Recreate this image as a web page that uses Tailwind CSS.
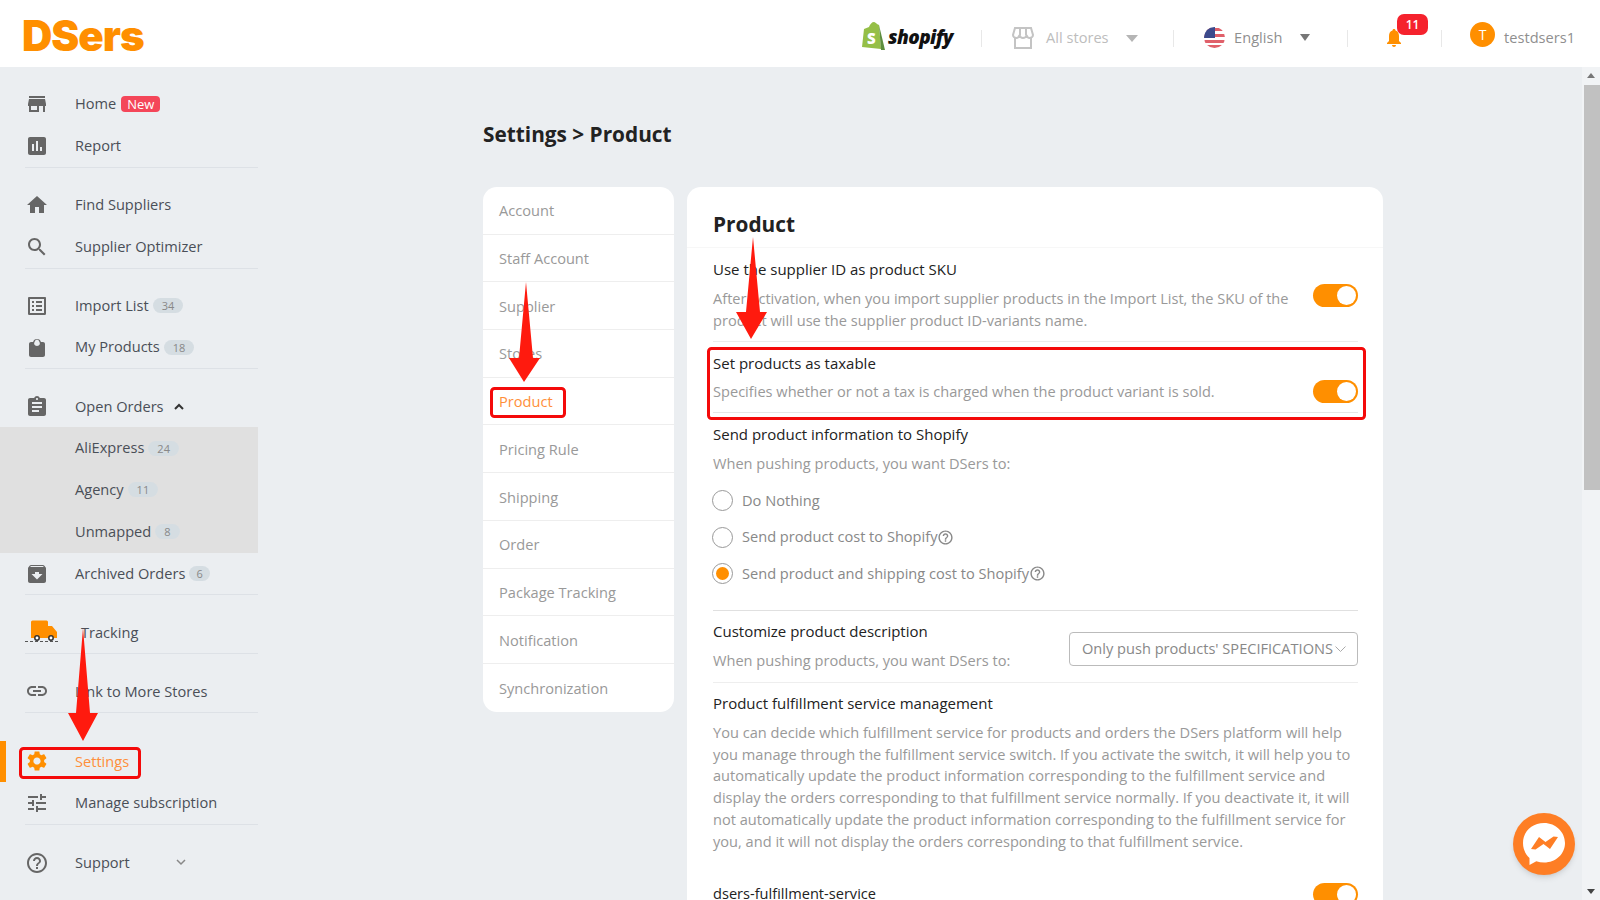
<!DOCTYPE html>
<html lang="en">
<head>
    <meta charset="UTF-8">
    <meta name="viewport" content="width=device-width, initial-scale=1.0">
    <title>DSers - Settings</title>
    <script src="https://cdn.jsdelivr.net/npm/@tailwindcss/browser@4"></script>
</head>
<body class="relative h-[900px] overflow-hidden bg-[#ebeef1] font-['Open_Sans',sans-serif] text-[14.600px] text-[#4a4f57]">

    <!-- top bar -->
    <header class="flex h-[67px] items-center bg-white">
        <div class="pl-[22px] pt-[4px] font-['Inter',sans-serif] text-[42px] font-black leading-none tracking-[-1px] text-[#ff8f00]">DSers</div>
        <div class="ml-auto flex items-center pt-[9px]">
            <div class="flex w-[119px] items-center">
                <svg class="h-[28px] w-[23px] -translate-y-[2px]" viewBox="0 0 23 28"><path fill="#95bf47" d="M2 7l5-2c1-3 3-5 5-5 1 0 2 1 3 2l2 1 2 24-19-2z"/><path fill="#5e8e3e" d="M17 3l6 25-4 0z"/><text x="5" y="22" font-size="15" font-weight="800" fill="#fff" font-family="Open Sans">S</text></svg>
                <span class="ml-[3px] -translate-y-[1px] text-[19px] font-extrabold italic leading-none tracking-[-0.6px] text-[#111]">shopify</span>
            </div>
            <div class="h-[17px] w-px bg-[#e8e8e8]"></div>
            <div class="flex w-[191px] items-center pl-[30px] text-[#bdbdbd]">
                <svg class="h-[22px] w-[22px]" viewBox="0 0 22 22" fill="none" stroke="#c4c4c4" stroke-width="2"><path d="M3 1h16l2 7c0 2-2 3-3.500 3S15 10 14.500 8c0 2-2 3-3.500 3S8 10 7.500 8C7 10 6 11 4.500 11S1 10 1 8zM3 11v10h16V11M8 1v7M14 1v7"/></svg>
                <span class="ml-[12px]">All stores</span>
                <span class="ml-[17px] h-0 w-0 border-x-[6px] border-t-[7px] border-x-transparent border-t-[#b5b5b5]"></span>
            </div>
            <div class="h-[17px] w-px bg-[#e8e8e8]"></div>
            <div class="flex w-[173px] items-center pl-[30px] text-[#8f8f8f]">
                <svg class="h-[21px] w-[21px] rounded-full" viewBox="0 0 21 21"><rect width="21" height="21" fill="#fff"/><path fill="#e0606a" d="M0 1h21v3H0zM0 7h21v3H0zM0 13h21v3H0zM0 18h21v3H0z"/><rect width="11" height="11" fill="#3c4a8c"/></svg>
                <span class="ml-[9px]">English</span>
                <span class="ml-[18px] h-0 w-0 border-x-[5.500px] border-t-[7px] border-x-transparent border-t-[#777]"></span>
            </div>
            <div class="h-[17px] w-px bg-[#e8e8e8]"></div>
            <div class="relative w-[93px] pl-[39px]">
                <svg class="h-[18px] w-[14px]" viewBox="0 0 14 18" fill="#ff8f00"><path d="M7 0c1 0 1.500.7 1.500 1.500C11 2.300 12 4.500 12 7v5l2 2v1H0v-1l2-2V7c0-2.500 1-4.700 3.500-5.500C5.500.7 6 0 7 0zM5 16h4c0 1-1 2-2 2s-2-1-2-2z"/></svg>
                <span class="absolute left-[49px] top-[-15px] flex h-[21px] w-[31px] items-center justify-center rounded-[7px] bg-[#f5222d] text-[12px] font-semibold text-white">11</span>
            </div>
            <div class="h-[17px] w-px bg-[#e8e8e8]"></div>
            <div class="flex items-center pl-[28px] pr-[25px] text-[#8f8f8f]">
                <span class="flex h-[25px] w-[25px] -translate-y-[4px] items-center justify-center rounded-full bg-[#ff8f00] text-[14px] text-white">T</span>
                <span class="ml-[9px]">testdsers1</span>
            </div>
        </div>
    </header>

    <div class="flex h-[833px] overflow-hidden">
        <!-- sidebar -->
        <nav class="w-[258px] shrink-0 pt-[16.500px]">
            <div class="ml-[25px] border-b border-[#dde1e6]">
                <a class="flex h-[41.800px] items-center gap-[26px]"><svg class="h-6 w-6 fill-[#666]" viewBox="0 0 24 24"><path d="M20 4H4v2h16V4zm1 10v-2l-1-5H4l-1 5v2h1v6h10v-6h4v6h2v-6h1zm-9 4H6v-4h6v4z"/></svg><span class="flex items-center">Home<span class="ml-[5px] rounded-[4px] bg-[#f44659] px-[6px] text-[13px] leading-[16px] text-white">New</span></span></a>
                <a class="flex h-[41.800px] items-center gap-[26px]"><svg class="h-6 w-6 fill-[#666]" viewBox="0 0 24 24"><path d="M19 3H5c-1.100 0-2 .9-2 2v14c0 1.100.9 2 2 2h14c1.100 0 2-.9 2-2V5c0-1.100-.9-2-2-2zM9 17H7v-7h2v7zm4 0h-2V7h2v10zm4 0h-2v-4h2v4z"/></svg>Report</a>
            </div>
            <div class="ml-[25px] mt-[16px] border-b border-[#dde1e6]">
                <a class="flex h-[41.800px] items-center gap-[26px]"><svg class="h-6 w-6 fill-[#666]" viewBox="0 0 24 24"><path d="M10 20v-6h4v6h5v-8h3L12 3 2 12h3v8z"/></svg>Find Suppliers</a>
                <a class="flex h-[41.800px] items-center gap-[26px]"><svg class="h-6 w-6 fill-[#666]" viewBox="0 0 24 24"><path d="M15.500 14h-.79l-.28-.27C15.410 12.590 16 11.110 16 9.500 16 5.910 13.090 3 9.500 3S3 5.910 3 9.500 5.910 16 9.500 16c1.610 0 3.090-.59 4.230-1.570l.27.28v.79l5 4.990L20.490 19l-4.990-5zm-6 0C7.010 14 5 11.990 5 9.500S7.010 5 9.500 5 14 7.010 14 9.500 11.990 14 9.500 14z"/></svg>Supplier Optimizer</a>
            </div>
            <div class="ml-[25px] mt-[16px] border-b border-[#dde1e6]">
                <a class="flex h-[41.800px] items-center gap-[26px]"><svg class="h-6 w-6 fill-[#666]" viewBox="0 0 24 24"><path d="M19 5v14H5V5h14m1.100-2H3.900c-.5 0-.9.4-.9.9v16.200c0 .4.4.9.9.9h16.200c.4 0 .9-.5.9-.9V3.900c0-.5-.5-.9-.9-.9zM11 7h6v2h-6V7zm0 4h6v2h-6v-2zm0 4h6v2h-6zM7 7h2v2H7zm0 4h2v2H7zm0 4h2v2H7z"/></svg><span class="flex items-center">Import List<span class="ml-[4px] rounded-full bg-[#d5dde2] px-[9px] text-[11px] leading-[15px] text-[#888]">34</span></span></a>
                <a class="flex h-[41.800px] items-center gap-[26px]"><svg class="h-6 w-6 fill-[#666]" viewBox="0 0 24 24"><path d="M18 7h-2.100a4 4 0 0 0-7.800 0H6c-1.100 0-2 .9-2 2v11c0 1.100.9 2 2 2h12c1.100 0 2-.9 2-2V9c0-1.100-.9-2-2-2zm-6-2.200c.9 0 1.700.5 2 1.200a5 5 0 0 1 .9 3c-.5 1.200-1.600 2-2.900 2s-2.400-.8-2.900-2a5 5 0 0 1 .9-3c.3-.7 1.100-1.200 2-1.200z"/></svg><span class="flex items-center">My Products<span class="ml-[4px] rounded-full bg-[#d5dde2] px-[9px] text-[11px] leading-[15px] text-[#888]">18</span></span></a>
            </div>
            <a class="ml-[25px] mt-[17px] flex h-[41px] items-center gap-[26px]"><svg class="h-6 w-6 fill-[#666]" viewBox="0 0 24 24"><path d="M19 3h-4.180C14.400 1.840 13.300 1 12 1c-1.300 0-2.400.84-2.820 2H5c-1.100 0-2 .9-2 2v14c0 1.100.9 2 2 2h14c1.100 0 2-.9 2-2V5c0-1.100-.9-2-2-2zm-7 0c.55 0 1 .45 1 1s-.45 1-1 1-1-.45-1-1 .45-1 1-1zm2 14H7v-2h7v2zm3-4H7v-2h10v2zm0-4H7V7h10v2z"/></svg><span class="flex items-center">Open Orders<svg class="ml-[10px] h-[8px] w-[10px]" viewBox="0 0 10 8" fill="none" stroke="#333" stroke-width="2"><path d="M1 6l4-4 4 4"/></svg></span></a>
            <div class="bg-[#e0e0e0] pl-[75px]">
                <a class="flex h-[41.800px] items-center">AliExpress<span class="ml-[4px] rounded-full bg-[#d5dde2] px-[9px] text-[11px] leading-[15px] text-[#888]">24</span></a>
                <a class="flex h-[41.800px] items-center">Agency<span class="ml-[4px] rounded-full bg-[#d5dde2] px-[9px] text-[11px] leading-[15px] text-[#888]">11</span></a>
                <a class="flex h-[41.800px] items-center">Unmapped<span class="ml-[4px] rounded-full bg-[#d5dde2] px-[9px] text-[11px] leading-[15px] text-[#888]">8</span></a>
            </div>
            <div class="ml-[25px] border-b border-[#dde1e6]">
                <a class="flex h-[41.800px] items-center gap-[26px]"><svg class="h-6 w-6 fill-[#666]" viewBox="0 0 24 24"><path d="M20.540 5.230l-1.390-1.680C18.880 3.210 18.470 3 18 3H6c-.47 0-.88.21-1.160.55L3.460 5.230C3.170 5.570 3 6.020 3 6.500V19c0 1.100.9 2 2 2h14c1.100 0 2-.9 2-2V6.500c0-.48-.17-.93-.46-1.270zM12 17.500L6.500 12H10v-2h4v2h3.500L12 17.500zM5.120 5l.81-1h12l.94 1H5.120z"/></svg><span class="flex items-center">Archived Orders<span class="ml-[4px] rounded-full bg-[#d5dde2] px-[7px] text-[11px] leading-[15px] text-[#888]">6</span></span></a>
            </div>
            <div class="ml-[25px] mt-[16.500px] border-b border-[#dde1e6]">
                <a class="flex h-[41px] items-center gap-[26px]"><svg class="h-[24px] w-[33px] -mr-[3px] -translate-y-[1px]" viewBox="0 0 33 24"><path fill="#ff8f00" d="M6 3a1.500 1.500 0 0 1 1.500-1.500h14A1.500 1.500 0 0 1 23 3v4h4l5 6v6H6z"/><circle cx="12" cy="19" r="2.200" fill="#fff" stroke="#333" stroke-width="1.500"/><circle cx="26" cy="19" r="2.200" fill="#fff" stroke="#333" stroke-width="1.500"/><path stroke="#555" stroke-dasharray="3 2" d="M0 22.500h33"/></svg>Tracking</a>
            </div>
            <div class="ml-[25px] mt-[17px] border-b border-[#dde1e6]">
                <a class="flex h-[41px] items-center gap-[26px]"><svg class="h-6 w-6 fill-[#666]" viewBox="0 0 24 24"><path d="M3.900 12c0-1.710 1.390-3.100 3.100-3.100h4V7H7c-2.760 0-5 2.240-5 5s2.240 5 5 5h4v-1.900H7c-1.710 0-3.100-1.390-3.100-3.100zM8 13h8v-2H8v2zm9-6h-4v1.900h4c1.710 0 3.100 1.390 3.100 3.100s-1.390 3.100-3.100 3.100h-4V17h4c2.760 0 5-2.240 5-5s-2.240-5-5-5z"/></svg>Link to More Stores</a>
            </div>
            <a class="mt-[28px] flex h-[41px] items-center gap-[26px] border-l-[6px] border-[#ff8f00] pl-[19px] text-[#ff8f3a]"><svg class="h-6 w-6 fill-[#ff8f00]" viewBox="0 0 24 24"><path d="M19.140 12.940c.04-.3.06-.61.06-.94 0-.32-.02-.64-.07-.94l2.030-1.580c.18-.14.23-.41.12-.61l-1.920-3.320c-.12-.22-.37-.29-.59-.22l-2.390.96c-.5-.38-1.030-.7-1.620-.94l-.36-2.540c-.04-.24-.24-.41-.48-.41h-3.840c-.24 0-.43.17-.47.41l-.36 2.540c-.59.24-1.130.57-1.620.94l-2.390-.96c-.22-.08-.47 0-.59.22L2.740 8.870c-.12.21-.08.47.12.61l2.030 1.580c-.05.3-.09.63-.09.94s.02.64.07.94l-2.030 1.580c-.18.14-.23.41-.12.61l1.920 3.320c.12.22.37.29.59.22l2.390-.96c.5.38 1.030.7 1.620.94l.36 2.540c.05.24.24.41.48.41h3.840c.24 0 .44-.17.47-.41l.36-2.540c.59-.24 1.130-.56 1.620-.94l2.390.96c.22.08.47 0 .59-.22l1.920-3.320c.12-.22.07-.47-.12-.61l-2.010-1.580zM12 15.600c-1.980 0-3.600-1.620-3.600-3.600s1.620-3.600 3.600-3.600 3.600 1.620 3.600 3.600-1.620 3.600-3.600 3.600z"/></svg>Settings</a>
            <div class="ml-[25px] border-b border-[#dde1e6]">
                <a class="flex h-[41.800px] items-center gap-[26px]"><svg class="h-6 w-6 fill-[#666]" viewBox="0 0 24 24"><path d="M3 17v2h6v-2H3zM3 5v2h10V5H3zm10 16v-2h8v-2h-8v-2h-2v6h2zM7 9v2H3v2h4v2h2V9H7zm14 4v-2H11v2h10zm-6-4h2V7h4V5h-4V3h-2v6z"/></svg>Manage subscription</a>
            </div>
            <a class="ml-[25px] mt-[17px] flex h-[42px] items-center gap-[26px]"><svg class="h-6 w-6 fill-[#666]" viewBox="0 0 24 24"><path d="M11 18h2v-2h-2v2zm1-16C6.480 2 2 6.480 2 12s4.480 10 10 10 10-4.480 10-10S17.520 2 12 2zm0 18c-4.410 0-8-3.590-8-8s3.590-8 8-8 8 3.590 8 8-3.590 8-8 8zm0-14c-2.210 0-4 1.790-4 4h2c0-1.100.9-2 2-2s2 .9 2 2c0 2-3 1.750-3 5h2c0-2.250 3-2.500 3-5 0-2.210-1.790-4-4-4z"/></svg><span class="flex items-center">Support<svg class="ml-[46px] h-[7px] w-[10px]" viewBox="0 0 10 7" fill="none" stroke="#888" stroke-width="1.500"><path d="M1 1l4 4 4-4"/></svg></span></a>
        </nav>

        <!-- settings page -->
        <main class="pl-[225px]">
            <h1 class="mt-[52px] h-[30px] text-[20.800px] font-bold leading-[30px] text-[#222]">Settings &gt; Product</h1>
            <div class="mt-[38px] flex gap-[13px]">
                <ul class="h-[525px] w-[191px] overflow-hidden rounded-[14px] bg-white text-[#999]">
                    <li class="flex h-[47.700px] items-center border-b border-[#eee] pl-[16px] pt-[2px]">Account</li>
                    <li class="flex h-[47.700px] items-center border-b border-[#eee] pl-[16px] pt-[2px]">Staff Account</li>
                    <li class="flex h-[47.700px] items-center border-b border-[#eee] pl-[16px] pt-[2px]">Supplier</li>
                    <li class="flex h-[47.700px] items-center border-b border-[#eee] pl-[16px] pt-[2px]">Stores</li>
                    <li class="flex h-[47.700px] items-center border-b border-[#eee] pl-[16px] pt-[2px] text-[#ff8f3a]">Product</li>
                    <li class="flex h-[47.700px] items-center border-b border-[#eee] pl-[16px] pt-[2px]">Pricing Rule</li>
                    <li class="flex h-[47.700px] items-center border-b border-[#eee] pl-[16px] pt-[2px]">Shipping</li>
                    <li class="flex h-[47.700px] items-center border-b border-[#eee] pl-[16px] pt-[2px]">Order</li>
                    <li class="flex h-[47.700px] items-center border-b border-[#eee] pl-[16px] pt-[2px]">Package Tracking</li>
                    <li class="flex h-[47.700px] items-center border-b border-[#eee] pl-[16px] pt-[2px]">Notification</li>
                    <li class="flex h-[47.700px] items-center pl-[16px] pt-[2px]">Synchronization</li>
                </ul>

                <section class="h-[800px] w-[696px] rounded-t-[14px] bg-white text-[#999]">
                    <h2 class="h-[61px] border-b border-[#f7f7f7] pl-[26px] pt-[22px] text-[20.800px] font-bold leading-[30px] text-[#222]">Product</h2>
                    <div class="pl-[26px] pr-[25px] leading-[21.800px]">
                        <div class="flex h-[94px] items-start justify-between border-b border-[#ececec] pt-[11px]">
                            <div class="w-[580px]">
                                <h3 class="mb-[7px] text-[15px] font-medium text-[#222]">Use the supplier ID as product SKU</h3>
                                <p>After activation, when you import supplier products in the Import List, the SKU of the product will use the supplier product ID-variants name.</p>
                            </div>
                            <span class="relative mt-[25px] block h-[23px] w-[45px] rounded-full bg-[#ff8f00]"><span class="absolute right-[2px] top-[2px] h-[19px] w-[19px] rounded-full bg-white"></span></span>
                        </div>
                        <div class="flex h-[71px] items-start justify-between border-b border-[#e6e6e6] pt-[11px]">
                            <div>
                                <h3 class="mb-[6px] text-[15px] font-medium text-[#222]">Set products as taxable</h3>
                                <p>Specifies whether or not a tax is charged when the product variant is sold.</p>
                            </div>
                            <span class="relative mt-[27px] block h-[23px] w-[45px] rounded-full bg-[#ff8f00]"><span class="absolute right-[2px] top-[2px] h-[19px] w-[19px] rounded-full bg-white"></span></span>
                        </div>
                        <div class="h-[198px] border-b border-[#e0e0e0] pt-[11px]">
                            <h3 class="mb-[7px] text-[15px] font-medium text-[#222]">Send product information to Shopify</h3>
                            <p>When pushing products, you want DSers to:</p>
                            <div class="mt-[8px] flex h-[36.500px] items-center text-[#888]"><span class="-ml-px h-[21px] w-[21px] rounded-full border border-[#999]"></span><span class="ml-[9px]">Do Nothing</span></div>
                            <div class="flex h-[36.500px] items-center text-[#888]"><span class="-ml-px h-[21px] w-[21px] rounded-full border border-[#999]"></span><span class="ml-[9px]">Send product cost to Shopify</span><svg class="h-[17px] w-[17px]" viewBox="0 0 24 24" fill="#888"><path d="M11 18h2v-2h-2v2zm1-16C6.480 2 2 6.480 2 12s4.480 10 10 10 10-4.480 10-10S17.520 2 12 2zm0 18c-4.410 0-8-3.590-8-8s3.590-8 8-8 8 3.590 8 8-3.590 8-8 8zm0-14c-2.210 0-4 1.790-4 4h2c0-1.100.9-2 2-2s2 .9 2 2c0 2-3 1.750-3 5h2c0-2.250 3-2.500 3-5 0-2.210-1.790-4-4-4z"/></svg></div>
                            <div class="flex h-[36.500px] items-center text-[#888]"><span class="-ml-px flex h-[21px] w-[21px] items-center justify-center rounded-full border border-[#999]"><span class="h-[13px] w-[13px] rounded-full bg-[#ff8f00]"></span></span><span class="ml-[9px]">Send product and shipping cost to Shopify</span><svg class="h-[17px] w-[17px]" viewBox="0 0 24 24" fill="#888"><path d="M11 18h2v-2h-2v2zm1-16C6.480 2 2 6.480 2 12s4.480 10 10 10 10-4.480 10-10S17.520 2 12 2zm0 18c-4.410 0-8-3.590-8-8s3.590-8 8-8 8 3.590 8 8-3.590 8-8 8zm0-14c-2.210 0-4 1.790-4 4h2c0-1.100.9-2 2-2s2 .9 2 2c0 2-3 1.750-3 5h2c0-2.250 3-2.500 3-5 0-2.210-1.790-4-4-4z"/></svg></div>
                        </div>
                        <div class="flex h-[72px] items-start justify-between border-b border-[#eee] pt-[10px]">
                            <div>
                                <h3 class="mb-[7px] text-[15px] font-medium text-[#222]">Customize product description</h3>
                                <p>When pushing products, you want DSers to:</p>
                            </div>
                            <div class="mt-[11px] flex h-[34px] w-[289px] items-center justify-between rounded-[4px] border border-[#bbb] pl-[12px] pr-[11px] text-[#888]">Only push products' SPECIFICATIONS<svg class="h-[7px] w-[11px]" viewBox="0 0 11 7" fill="none" stroke="#aaa"><path d="M.5.5l5 5 5-5"/></svg></div>
                        </div>
                        <div class="pt-[10px]">
                            <h3 class="mb-[7px] text-[15px] font-medium text-[#222]">Product fulfillment service management</h3>
                            <p>You can decide which fulfillment service for products and orders the DSers platform will help you manage through the fulfillment service switch. If you activate the switch, it will help you to automatically update the product information corresponding to the fulfillment service and display the orders corresponding to that fulfillment service normally. If you deactivate it, it will not automatically update the product information corresponding to the fulfillment service for you, and it will not display the orders corresponding to that fulfillment service.</p>
                        </div>
                        <div class="mt-[28px] flex items-start justify-between">
                            <h3 class="mt-[4px] font-medium leading-[16px] text-[#222]">dsers-fulfillment-service</h3>
                            <span class="relative mt-[2px] block h-[23px] w-[45px] rounded-full bg-[#ff8f00]"><span class="absolute right-[2px] top-[2px] h-[19px] w-[19px] rounded-full bg-white"></span></span>
                        </div>
                    </div>
                </section>
            </div>
        </main>
    </div>

    <!-- page scrollbar -->
    <div class="absolute right-0 top-[67px] h-[833px] w-[18px] bg-[#f1f3f5]">
        <span class="absolute left-[5px] top-[6px] h-0 w-0 border-x-[4px] border-b-[5px] border-x-transparent border-b-[#777]"></span>
        <div class="absolute left-[2px] top-[18px] h-[405px] w-[16px] bg-[#c1c1c1]"></div>
        <span class="absolute left-[5px] bottom-[6px] h-0 w-0 border-x-[4px] border-t-[5px] border-x-transparent border-t-[#444]"></span>
    </div>

    <!-- messenger button -->
    <div class="absolute left-[1513px] top-[813px] flex h-[62px] w-[62px] items-center justify-center rounded-full bg-[#fe7e25] shadow-md">
        <svg class="h-[44px] w-[44px]" viewBox="0 0 44 44"><path fill="#fff" d="M22 1C10 1 1 9.500 1 21c0 6 2.500 11.300 6.500 15v7l6.800-3.700c2.400.8 5 1.200 7.700 1.200 12 0 21-8.700 21-19.500S34 1 22 1z"/><path fill="#fe7e25" d="M9 27l8-12 6.500 5 8-5.500L36 15l-8 12-6.500-5-8 5.500z"/></svg>
    </div>

    <!-- red annotations -->
    <svg class="pointer-events-none absolute left-0 top-0" width="1600" height="900" viewBox="0 0 1600 900">
        <g fill="#ff1a0e">
            <polygon points="83,628 90,713 98,713 83,741 68,713 76,713"/>
            <polygon points="526,282 533,358 540,358 524,382 509,358 519,358"/>
            <polygon points="753,237 760,312 767,312 751,339 736,312 746,312"/>
        </g>
        <g fill="none" stroke="#f40a0a" stroke-width="3">
            <rect x="20.500" y="748.500" width="119" height="29" rx="3"/>
            <rect x="491.500" y="388.500" width="73" height="28" rx="3"/>
            <rect x="708.500" y="348.500" width="656" height="70" rx="3"/>
        </g>
    </svg>
</body>
</html>
